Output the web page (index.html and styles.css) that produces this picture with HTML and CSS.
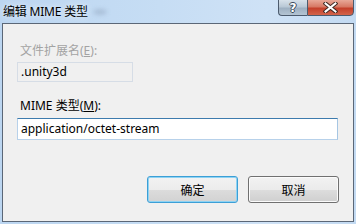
FILE: index.html
```
<!DOCTYPE html>
<html>
<head>
    <meta charset="UTF-8">
    <title>编辑 MIME 类型</title>
    <link rel="stylesheet" href="styles.css">
</head>
<body>
<div class="window">
    <div class="titlebar">
        <span class="title">编辑 MIME 类型</span>
        <span class="title__glow"></span>
        <div class="caption">
            <div class="caption__btn caption__help"><span class="help__mark">?</span></div>
            <div class="caption__btn caption__close">
                <svg width="15" height="11" viewBox="0 0 15 11">
                    <path d="M2.5 1.5 L12.5 9.5 M12.5 1.5 L2.5 9.5" stroke="#3b2722" stroke-width="4" stroke-linecap="square"/>
                    <path d="M2.5 1.5 L12.5 9.5 M12.5 1.5 L2.5 9.5" stroke="#fff" stroke-width="2" stroke-linecap="square"/>
                </svg>
            </div>
        </div>
    </div>

    <div class="client">
        <div class="label label--disabled">文件扩展名(<u>E</u>):</div>
        <div class="box box--disabled">.unity3d</div>

        <div class="label label--second">MIME 类型(<u>M</u>):</div>
        <div class="box box--active">application/octet-stream</div>

        <div class="buttons">
            <button class="btn btn--default">确定</button>
            <button class="btn">取消</button>
        </div>
    </div>
</div>
</body>
</html>
```

FILE: styles.css
```
* {
    padding: 0;
    margin: 0;
    box-sizing: border-box;
}

body {
    width: 356px;
    height: 224px;
    overflow: hidden;
    font-family: "Noto Sans", "Noto Sans CJK SC", sans-serif;
    font-size: 12px;
    color: #000;
}

.window {
    width: 356px;
    height: 224px;
    display: flex;
    flex-direction: column;
    background: linear-gradient(to right, #bcd6f1 0%, #c6ddf4 45%, #cfe2f6 75%, #c3daf2 100%);
}

.titlebar {
    position: relative;
    height: 23px;
    flex-shrink: 0;
    display: flex;
    align-items: flex-start;
}

.title {
    padding: 4px 0 0 3px;
    line-height: 15px;
    letter-spacing: -0.2px;
    text-shadow: 0 0 6px rgba(255, 255, 255, 0.9);
}

.title__glow {
    width: 14px;
    height: 6px;
    margin: 9px 0 0 5px;
    border-radius: 50%;
    background: rgba(150, 170, 195, 0.55);
    filter: blur(2px);
}

.caption {
    position: absolute;
    top: -1px;
    right: 2px;
    display: flex;
}

.caption__btn {
    height: 17px;
    border: 1px solid #4c5b6e;
    display: flex;
    align-items: center;
    justify-content: center;
}

.caption__help {
    width: 29px;
    border-right: none;
    border-bottom-left-radius: 4px;
    background: linear-gradient(#d7e1ea 0%, #b9c8d6 45%, #9eb0c2 55%, #b4c4d3 100%);
}

.help__mark {
    font-family: "DejaVu Sans", sans-serif;
    font-weight: bold;
    font-size: 12px;
    line-height: 12px;
    margin-top: 1px;
    color: #fff;
    text-shadow: -1px 0 #3c4a5a, 1px 0 #3c4a5a, 0 -1px #3c4a5a, 0 1px #3c4a5a;
}

.caption__close {
    width: 47px;
    border-bottom-right-radius: 4px;
    background: linear-gradient(#e8a898 0%, #d77965 45%, #c4402b 55%, #d2644b 100%);
}

.client {
    flex: 1;
    margin: 0 2px 2px 2px;
    border: 1px solid #5b6777;
    background: #f0f0f0;
    padding: 19px 14px 0 14px;
    display: flex;
    flex-direction: column;
}

.label {
    height: 15px;
    line-height: 15px;
    padding-left: 3px;
}

.label u {
    text-decoration-thickness: 1px;
    text-underline-offset: 1px;
}

.label--disabled {
    color: #a3a3a3;
}

.label--second {
    margin-top: 16px;
}

.box {
    margin-top: 4px;
    padding-left: 3px;
    line-height: 18px;
}

.box--disabled {
    width: 116px;
    height: 20px;
    border: 1px solid #d6dde6;
    background: #f0f0f0;
}

.box--active {
    margin-top: 5px;
    width: 321px;
    height: 22px;
    line-height: 20px;
    border: 1px solid #b7d1ea;
    border-top-color: #3d7bad;
    border-right-color: #a6c6e3;
    background: #fff;
}

.buttons {
    margin-top: 36px;
    display: flex;
    justify-content: flex-end;
    gap: 10px;
    padding-right: 0;
}

.btn {
    width: 91px;
    height: 27px;
    font-family: "Noto Sans CJK SC", sans-serif;
    font-size: 12px;
    color: #000;
    border: 1px solid #707070;
    border-radius: 3px;
    background: linear-gradient(#f2f2f2 0%, #ebebeb 50%, #dddddd 51%, #cfcfcf 100%);
    box-shadow: inset 0 0 0 1px #fbfbfb;
}

.btn--default {
    border-color: #3c9fd6;
    box-shadow: inset 0 0 0 1px #8fd3f3;
    background: linear-gradient(#f2f2f2 0%, #ececec 50%, #dcdcdc 51%, #d2d2d2 100%);
}
```
